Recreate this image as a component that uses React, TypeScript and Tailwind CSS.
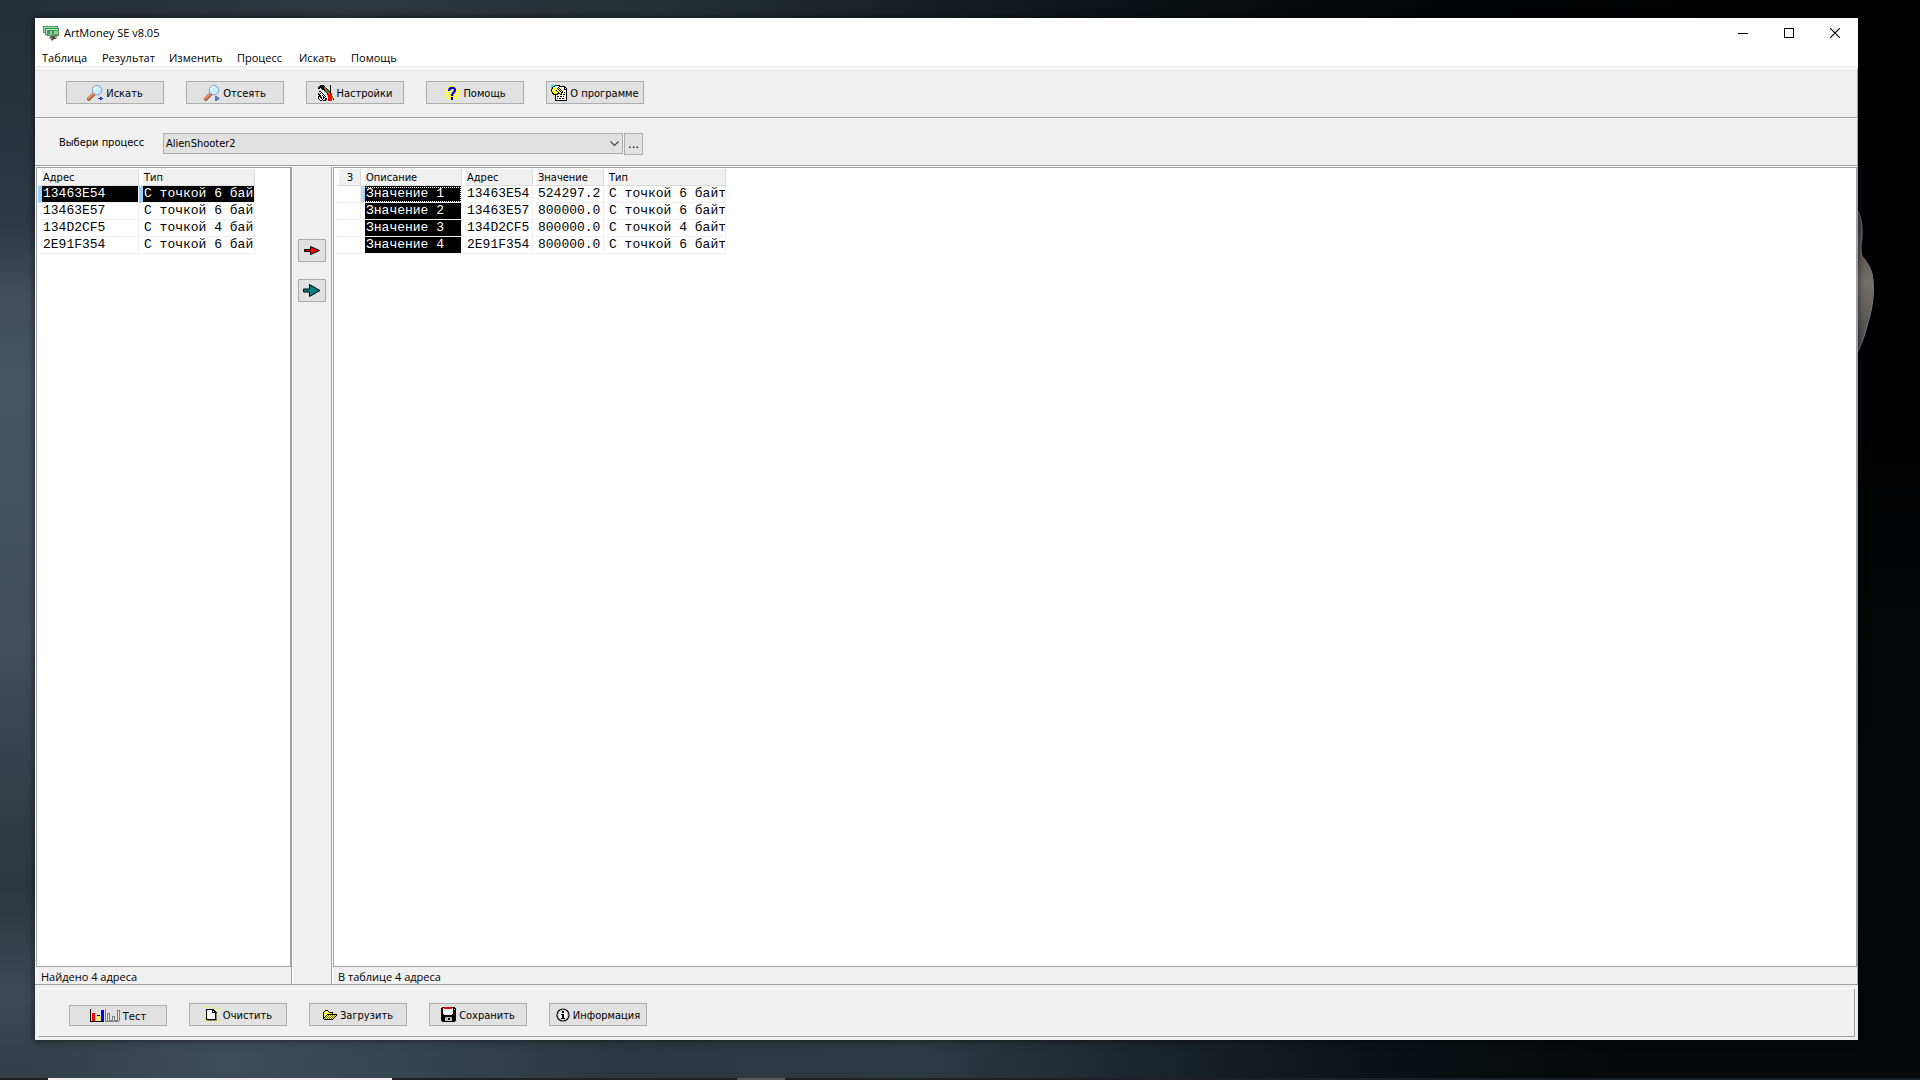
import { useState } from 'react';
import type { ReactNode } from 'react';

const PALETTE: Record<string, string> = {
  K: '#000000',
  W: '#ffffff',
  R: '#ff0000',
  Y: '#ffff00',
  O: '#808000',
  B: '#0000ff',
  C: '#00ffff',
  G: '#808080',
  L: '#c0c0c0',
  P: '#f5f07a',
};

// one character per pixel, a dot is transparent
function PixelIcon({ rows }: { rows: string[] }) {
  const width = rows[0].length;
  return (
    <svg
      width={width}
      height={rows.length}
      viewBox={`0 0 ${width} ${rows.length}`}
      shapeRendering="crispEdges"
      className="shrink-0"
      aria-hidden="true"
    >
      {rows.flatMap((row, y) =>
        row.split('').map((c, x) =>
          PALETTE[c] ? <rect key={`${x}-${y}`} x={x} y={y} width="1" height="1" fill={PALETTE[c]} /> : null
        )
      )}
    </svg>
  );
}

const TOOLS = [
  '..KKKK......K...',
  '.KKKKKK.....K...',
  'KKKKKKOO....K...',
  'KK.KKKOOK...K...',
  '....KKKOOK..K...',
  '......KOOOK.K...',
  '.KK....KOOOKK...',
  '..WK....KOOOK...',
  'K.KWK....KOORR..',
  'KKWWWK...KRRRR..',
  '.KKWKWK...RRRR..',
  'KKK..KWK..RRRRO.',
  'KWKK.KKW..RRRRO.',
  'KW.KWK.KK.RRRROO',
  '.KWWKW.KK.RRRR.K',
  '..KK.KKK..RRRR..',
];

const ABOUT = [
  'CCCCKKKKK.......',
  'CCKKYWYWKKKKKK..',
  'CKYWYWYKWWWWWKK.',
  'CKWYWYKYKWWWWKWK',
  'KYWYWYWKYKWWWKKK',
  'KWYWYKYWKYKWWWWK',
  'KYWYWYKYWKYKWWWK',
  '.KWYWYWKYWKKWKWK',
  '.KKYWYKKKYKWWWWK',
  '..KKKKKWWKKWKKWK',
  '....KWWWWWWWWWWK',
  '....KWKKWKKWKWWK',
  '....KWWWWWWWWWWK',
  '....KWKWKKWKKWWK',
  '....KWWWWWWWWWWK',
  '....KKKKKKKKKKKK',
];

const CHARTS = [
  'K..............G..............',
  'K..........BBB.G...........GGG',
  'K..........BBB.G...........G.G',
  'K..........BBB.G...........G.G',
  'K.RRR......BBB.G.GGG.......G.G',
  'K.RRR......BBB.G.G.G.......G.G',
  'K.RRR..KKK.BBB.G.G.G.......G.G',
  'K.RRR..YYY.BBB.G.G.G..GGG..G.G',
  'K.RRR..YYY.BBB.G.G.G..G.G..G.G',
  'K.RRR..YYY.BBB.G.G.G..G.G..G.G',
  'K.RRR..YYY.BBB.G.G.G..G.G..G.G',
  'K.RRR..YYY.BBB.G.G.GGGG.GGGG.G',
  'KKKKKKKKKKKKKK.GGGGGGGGGGGGGGW',
];

const NEW_PAGE = [
  'Y.....Y........Y',
  '.Y...........YY.',
  '..KKKKKKKK..Y...',
  '..KWWWWWKKKY....',
  '..KWWWWWKWKK....',
  '..KWWWWWKKKKK...',
  '..KWWWWWWWWKG...',
  'Y.KWWWWWWWWKG.Y.',
  '..KWWWWWWWWKG...',
  '..KWWWWWWWWKG...',
  '..KWWWWWWWWKG...',
  '..KWWWWWWWWKG...',
  '.YKKKKKKKKKKGY..',
  'Y..GGGGGGGGGG.Y.',
  '......Y.......YY',
];

const FOLDER = [
  '..KKK.........',
  '.KPYPK........',
  'KPYPYPKKKK....',
  'KYPYPYPYPK....',
  'KPYPKKKKKKKKKK',
  'KYPKPOPOPOPOPK',
  'KPKPOPOPOPOPK.',
  'KKPOPOPOPOPK..',
  'KPOPOPOPOPK...',
  '.KKKKKKKKK....',
];

const FLOPPY = [
  '.KKRRRRRRRRKKK.',
  'KKWRRRRRRRRWKKK',
  'KKWWWWWWWWWWK.K',
  'KKWWWWWWWWWWKKK',
  'KKWWWWWWWWWWKKK',
  'KKWWWWWWWWWWKKK',
  'KKWWWWWWWWWWKKK',
  'KKKWWWWWWWWKKKK',
  'KKKKKKKKKKKKKKK',
  'KKKKKKKKKKKKKKK',
  'KKKKGLLLLLGKKKK',
  'KKKKLLLKKLLKKKK',
  'KKKKLLLKKLLKKKK',
  'KKKKLLLLLLLKKKK',
  '.KKKKKKKKKKKKK.',
];

function MagnifierIcon({ pause = false }: { pause?: boolean }) {
  return (
    <svg width="16" height="16" viewBox="0 0 16 16" className="shrink-0" aria-hidden="true">
      <path d="M1.800 14L6.500 9.200" stroke="#8a4a3a" strokeWidth="3.600" strokeLinecap="round" />
      <path d="M1.600 13.500L6.200 9" stroke="#ef9159" strokeWidth="2.200" strokeLinecap="round" />
      <circle cx="10" cy="5.200" r="4.700" fill="#c9effd" stroke="#7d9ccc" />
      <path d="M7.200 5a3 3 0 0 1 3-3" stroke="#fff" strokeWidth="1.500" fill="none" />
      {pause ? (
        <path d="M12 11v5M14 12v3" stroke="#1b4fae" strokeWidth="1.400" />
      ) : (
        <path d="M11 13.500h4M13.500 12l2 1.500-2 1.500z" stroke="#1b3f9e" fill="#1b3f9e" />
      )}
    </svg>
  );
}

function HelpIcon() {
  return (
    <svg width="16" height="16" viewBox="0 0 16 16" className="shrink-0" aria-hidden="true">
      <defs>
        <pattern id="dither" width="2" height="2" patternUnits="userSpaceOnUse">
          <rect width="2" height="2" fill="#ffff00" />
          <rect width="1" height="1" fill="#f2f2c0" />
          <rect x="1" y="1" width="1" height="1" fill="#f2f2c0" />
        </pattern>
      </defs>
      <circle cx="8" cy="8" r="7.500" fill="url(#dither)" />
      <path d="M5 6C5 2 11.500 2 11 5.300 11 7.500 8 7.500 8 11" stroke="#0000ff" strokeWidth="2.200" fill="none" />
      <rect x="7" y="12" width="2" height="3" fill="#0000ff" />
    </svg>
  );
}

function InfoIcon() {
  return (
    <svg width="14" height="14" viewBox="0 0 14 14" className="shrink-0" aria-hidden="true">
      <circle cx="7" cy="7" r="6" fill="#fff" stroke="#000" strokeWidth="1.200" />
      <circle cx="7" cy="7" r="4.800" fill="none" stroke="#bbb" strokeWidth="1" />
      <path d="M6 3h2v2H6zM5 6h3v4h1v1H5v-1h1V7H5z" fill="#000" />
    </svg>
  );
}

function AppIcon() {
  return (
    <svg width="17" height="16" viewBox="0 0 17 16" className="shrink-0" aria-hidden="true">
      <path d="M0 1h15v7H0z" fill="#3f9c5a" />
      <path d="M1 2h13v5H1z" fill="#a8dcb0" />
      <path d="M2 3h14v7H2z" fill="#2f9150" />
      <path d="M3 4h12v5H3z" fill="#c4ebc9" />
      <path d="M4 5h12v6H4z" fill="#3c9c5a" />
      <path d="M5 6h10v4H5z" fill="#8fcf9d" />
      <path d="M5 5h2v4H5zM9 5h2v4H9z" fill="#3f8f57" />
      <path d="M6 10l9-1v2l-4 2H8z" fill="#68806c" />
      <path d="M6 13l2-1 1 1 1-2h1l1 2 2-1-1 2h-2l-1 1-1 1-1-2z" fill="#444428" />
      <path d="M8 13h1v1H8zM12 12h1v1h-1zM13 8h2v1h-2z" fill="#e8d040" />
    </svg>
  );
}

function ToolButton({ icon, label, className = 'h-[23px]' }: { icon: ReactNode; label: string; className?: string }) {
  return (
    <button
      type="button"
      className={`flex w-[98px] items-center justify-center gap-[3px] border border-[#adadad] bg-[#e1e1e1] whitespace-nowrap hover:border-[#0078d7] hover:bg-[#e5f1fb] ${className}`}
    >
      {icon}
      <span className="pt-[2px]">{label}</span>
    </button>
  );
}

const menu = [
  { label: 'Таблица', width: 'w-[60px]' },
  { label: 'Результат', width: 'w-[67px]' },
  { label: 'Изменить', width: 'w-[68px]' },
  { label: 'Процесс', width: 'w-[62px]' },
  { label: 'Искать', width: 'w-[52px]' },
  { label: 'Помощь', width: 'w-[60px]' },
];

const found = [
  { address: '13463E54', type: 'С точкой 6 байт' },
  { address: '13463E57', type: 'С точкой 6 байт' },
  { address: '134D2CF5', type: 'С точкой 4 байт' },
  { address: '2E91F354', type: 'С точкой 6 байт' },
];

const saved = [
  { name: 'Значение 1', address: '13463E54', value: '524297.2', type: 'С точкой 6 байт' },
  { name: 'Значение 2', address: '13463E57', value: '800000.0', type: 'С точкой 6 байт' },
  { name: 'Значение 3', address: '134D2CF5', value: '800000.0', type: 'С точкой 4 байт' },
  { name: 'Значение 4', address: '2E91F354', value: '800000.0', type: 'С точкой 6 байт' },
];

const TH =
  'h-[17px] overflow-hidden border-r border-b border-l-4 border-[#dcdcdc] border-l-white bg-[#f0f0f0] p-0 pt-[2px] font-normal leading-[14px] whitespace-nowrap';
const TD = 'h-[17px] overflow-hidden border-r border-b border-l-4 border-[#f0f0f0] p-0 pl-px whitespace-nowrap';
const TABLE = 'table-fixed border-separate border-spacing-0 leading-4';
const MONO = "font-['Liberation_Mono',monospace] text-[13px]";

function FoundList({ selected, onSelect }: { selected: number; onSelect: (i: number) => void }) {
  return (
    <table className={`w-[217px] ${TABLE}`}>
      <colgroup>
        <col className="w-[101px]" />
        <col className="w-[116px]" />
      </colgroup>
      <thead>
        <tr>
          <th className={`${TH} pl-px text-left`}>Адрес</th>
          <th className={`${TH} pl-px text-left`}>Тип</th>
        </tr>
      </thead>
      <tbody className={MONO}>
        {found.map((row, i) => {
          const look = i === selected ? 'border-l-[#99d1ff] bg-black text-white' : 'border-l-white';
          return (
            <tr key={row.address} onClick={() => onSelect(i)}>
              <td className={`${TD} ${look}`}>{row.address}</td>
              <td className={`${TD} ${look}`}>{row.type}</td>
            </tr>
          );
        })}
      </tbody>
    </table>
  );
}

function SavedList() {
  return (
    <table className={`w-[391px] ${TABLE}`}>
      <colgroup>
        <col className="w-[26px]" />
        <col className="w-[101px]" />
        <col className="w-[71px]" />
        <col className="w-[71px]" />
        <col className="w-[122px]" />
      </colgroup>
      <thead>
        <tr>
          <th className={`${TH} pr-[7px] text-right`}>З</th>
          <th className={`${TH} pl-px text-left`}>Описание</th>
          <th className={`${TH} pl-px text-left`}>Адрес</th>
          <th className={`${TH} pl-px text-left`}>Значение</th>
          <th className={`${TH} pl-px text-left`}>Тип</th>
        </tr>
      </thead>
      <tbody className={MONO}>
        {saved.map((row, i) => (
          <tr key={row.name}>
            <td className={`${TD} border-l-white`} />
            <td
              className={`${TD} bg-black text-white ${
                i === 0 ? 'border-l-[#99d1ff] outline-1 -outline-offset-2 outline-dotted outline-white' : 'border-l-white'
              }`}
            >
              {row.name}
            </td>
            <td className={`${TD} border-l-white`}>{row.address}</td>
            <td className={`${TD} border-l-white`}>{row.value}</td>
            <td className={`${TD} border-l-white`}>{row.type}</td>
          </tr>
        ))}
      </tbody>
    </table>
  );
}

function Desktop() {
  return (
    <>
      <div className="absolute inset-y-0 left-0 w-[35px] bg-[linear-gradient(180deg,#262f38_0%,#2c3741_20%,#3f4e59_27%,#465563_35%,#42505e_58%,#323d45_75%,#2c363c_82%,#3b4a55_92%,#323e47_100%)]" />
      <svg className="absolute top-[207px] right-[45px]" width="18" height="150" viewBox="0 0 18 150" aria-hidden="true">
        <defs>
          <linearGradient id="stone" x1="0" y1="0" x2="0" y2="1">
            <stop offset="0" stopColor="#3b3d42" />
            <stop offset="0.3" stopColor="#5a5654" />
            <stop offset="0.5" stopColor="#777069" />
            <stop offset="1" stopColor="#45484a" />
          </linearGradient>
        </defs>
        <path
          d="M0 2Q6 12 5 30Q3 42 5 49Q15 60 16 72Q18 92 12 112Q8 130 0 147z"
          fill="url(#stone)"
          stroke="#6d7880"
        />
      </svg>
    </>
  );
}

export default function App() {
  const [selected, setSelected] = useState(0);

  return (
    <div className="relative flex h-screen min-h-[600px] flex-col bg-[linear-gradient(90deg,#323e47_0%,#3d4d58_12%,#354550_22%,#2b3740_32%,#2c3a43_48%,#1b242b_60%,#0b1115_72%,#060809_85%,#060809_100%)] font-['DejaVu_Sans_Condensed','DejaVu_Sans',sans-serif] text-[11px] leading-4 text-black">
      <div className="absolute inset-x-0 top-0 h-[18px] bg-[linear-gradient(90deg,#262e36_0%,#2e373e_18%,#252f34_35%,#10161a_55%,#020304_75%,#000_100%)]" />
      <div className="absolute inset-y-0 right-0 w-[62px] bg-[linear-gradient(180deg,#000_0%,#000_35%,#030506_60%,#060809_100%)]" />
      <Desktop />

      <main className="relative mt-[18px] mr-[62px] mb-[38px] ml-[35px] flex min-h-0 flex-1 flex-col bg-[#f0f0f0] shadow-[0_0_6px_1px_rgba(0,0,0,0.5)]">
        <header className="bg-white font-['Open_Sans','Noto_Sans',sans-serif]">
          <div className="flex h-[30px] items-center">
            <div className="flex flex-1 items-center gap-1 pl-2">
              <AppIcon />
              <h1>ArtMoney SE v8.05</h1>
            </div>
            <button type="button" aria-label="Свернуть" className="flex h-[28px] w-[46px] items-center justify-center hover:bg-gray-200">
              <svg width="10" height="10" viewBox="0 0 10 10" shapeRendering="crispEdges">
                <path d="M0 5h10v1H0z" />
              </svg>
            </button>
            <button type="button" aria-label="Развернуть" className="flex h-[28px] w-[46px] items-center justify-center hover:bg-gray-200">
              <svg width="10" height="10" viewBox="0 0 10 10" shapeRendering="crispEdges">
                <path d="M0 0h10v10H0zM1 1v8h8V1z" fillRule="evenodd" />
              </svg>
            </button>
            <button type="button" aria-label="Закрыть" className="flex h-[28px] w-[46px] items-center justify-center hover:bg-red-500">
              <svg width="10" height="10" viewBox="0 0 10 10">
                <path d="M0 0l10 10M10 0l-10 10" stroke="#000" strokeWidth="1.100" />
              </svg>
            </button>
          </div>
          <nav className="flex h-[18px] items-end pl-[7px]">
            {menu.map(item => (
              <button key={item.label} type="button" className={`text-left ${item.width}`}>
                {item.label}
              </button>
            ))}
          </nav>
        </header>

        <div className="mt-[2px] flex h-[50px] items-start gap-[22px] border-t border-r border-b border-t-white border-r-[#a0a0a0] border-b-[#a0a0a0] pt-3 pl-[31px]">
          <ToolButton icon={<MagnifierIcon />} label="Искать" />
          <ToolButton icon={<MagnifierIcon pause />} label="Отсеять" />
          <ToolButton icon={<PixelIcon rows={TOOLS} />} label="Настройки" />
          <ToolButton icon={<HelpIcon />} label="Помощь" />
          <ToolButton icon={<PixelIcon rows={ABOUT} />} label="О программе" />
        </div>

        <div className="flex h-[48px] items-start border-t border-r border-b border-t-white border-r-[#a0a0a0] border-b-[#a0a0a0] pt-[14px] pl-6">
          <label htmlFor="process" className="w-[104px] pt-[2px]">
            Выбери процесс
          </label>
          <div className="relative">
            <select
              id="process"
              defaultValue="AlienShooter2"
              className="h-[21px] w-[460px] appearance-none border border-[#adadad] bg-[#e1e1e1] pt-px pl-[2px]"
            >
              <option>AlienShooter2</option>
            </select>
            <svg className="pointer-events-none absolute top-2 right-1" width="9" height="6" viewBox="0 0 9 6" aria-hidden="true">
              <path d="M0.500 0.500l4 4 4-4" stroke="#444" strokeWidth="1.200" fill="none" />
            </svg>
          </div>
          <button type="button" className="ml-px h-[22px] w-[19px] border border-[#adadad] bg-[#e1e1e1] text-[13px]">
            ...
          </button>
        </div>

        <div className="flex min-h-0 flex-1 border-b border-[#a0a0a0]">
          <section className="flex w-[257px] flex-col border-t border-r border-l border-t-white border-r-[#a0a0a0] border-l-white">
            <div className="flex-1 overflow-hidden border border-[#a0a3aa] bg-white pt-px pl-px">
              <FoundList selected={selected} onSelect={setSelected} />
            </div>
            <p className="h-[17px] pl-[5px] font-['Open_Sans','Noto_Sans',sans-serif] leading-5">Найдено 4 адреса</p>
          </section>

          <div className="flex w-[40px] flex-col items-center gap-[17px] border-t border-r border-l border-t-white border-r-[#a0a0a0] border-l-white pt-[72px]">
            <button type="button" aria-label="Добавить в таблицу" className="flex h-[23px] w-[28px] items-center justify-center border border-[#adadad] bg-[#e1e1e1]">
              <svg width="16" height="9" viewBox="0 0 16 9">
                <path d="M0.500 3.500h6v-3l9 4-9 4v-3h-6z" fill="#ff0000" stroke="#000" />
              </svg>
            </button>
            <button type="button" aria-label="Добавить все" className="flex h-[23px] w-[28px] items-center justify-center border border-[#adadad] bg-[#e1e1e1]">
              <svg width="18" height="13" viewBox="0 0 18 13">
                <path d="M0.500 5h6V0.500l10.500 6-10.500 6V8h-6z" fill="#008080" stroke="#000" />
              </svg>
            </button>
          </div>

          <section className="flex flex-1 flex-col border-t border-r border-l border-t-white border-r-[#a0a0a0] border-l-white">
            <div className="flex-1 overflow-hidden border border-[#a0a3aa] bg-white pt-px pl-px">
              <SavedList />
            </div>
            <p className="h-[17px] pl-[5px] font-['Open_Sans','Noto_Sans',sans-serif] leading-5">В таблице 4 адреса</p>
          </section>
        </div>

        <footer className="p-[3px]">
          <div className="flex h-[49px] items-end gap-[22px] border border-t-white border-r-[#a0a0a0] border-b-[#a0a0a0] border-l-white pb-[10px] pl-[30px]">
            <ToolButton icon={<PixelIcon rows={CHARTS} />} label="Тест" className="h-[21px]" />
            <ToolButton icon={<PixelIcon rows={NEW_PAGE} />} label="Очистить" />
            <ToolButton icon={<PixelIcon rows={FOLDER} />} label="Загрузить" />
            <ToolButton icon={<PixelIcon rows={FLOPPY} />} label="Сохранить" />
            <ToolButton icon={<InfoIcon />} label="Информация" />
          </div>
        </footer>
      </main>

      {/* top edge of the taskbar */}
      <div className="relative flex h-[2px] bg-[#1b2126] pl-12">
        <div className="w-[344px] bg-[#f3f0ee]" />
        <div className="ml-[345px] w-12 bg-[#55595c]" />
      </div>
    </div>
  );
}
